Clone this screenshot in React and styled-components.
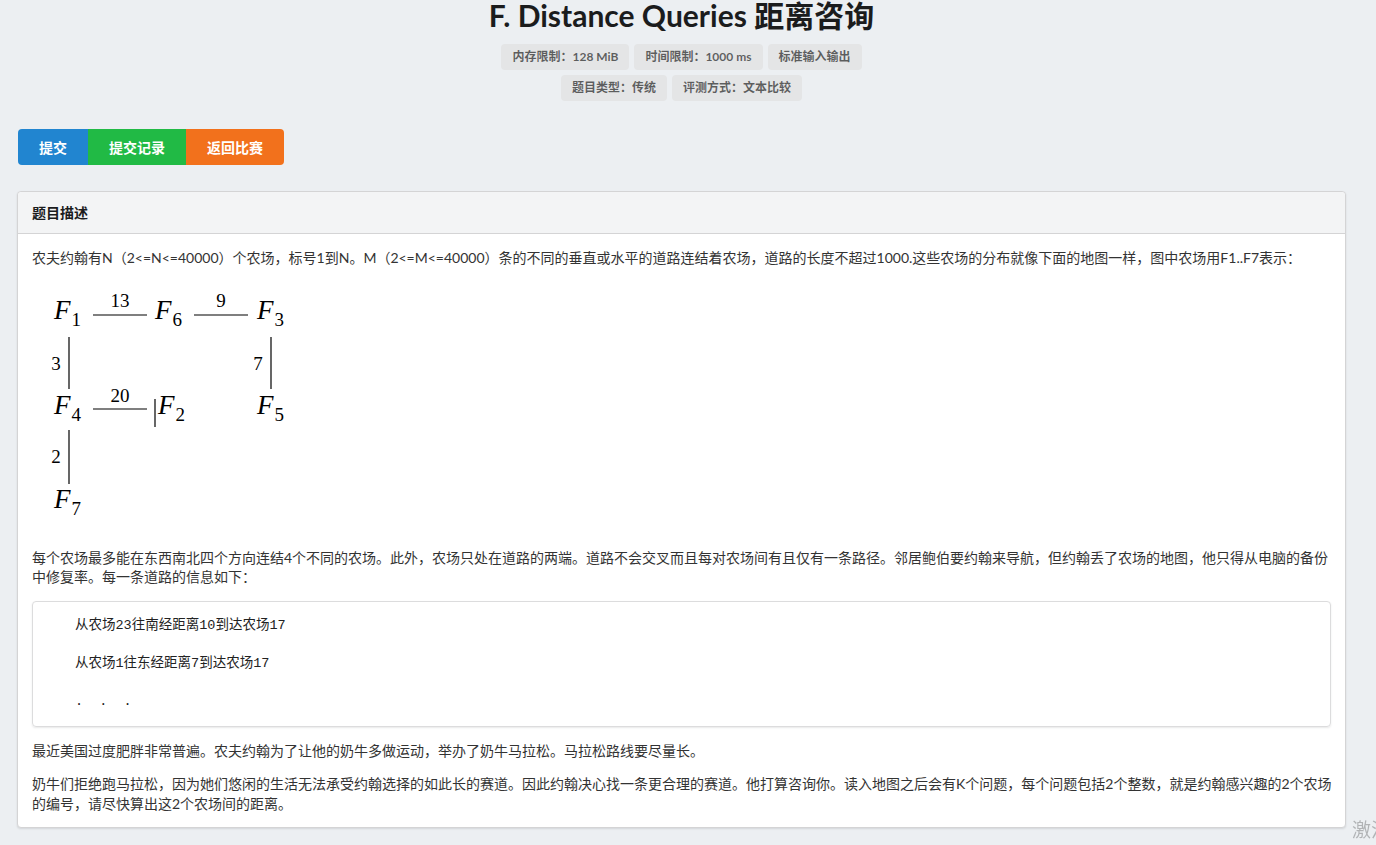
import styled, { createGlobalStyle } from 'styled-components'

const GlobalStyle = createGlobalStyle`
  html, body {
    margin: 0;
    padding: 0;
    background: #eceff2;
    overflow: hidden;
  }
  body {
    font-family: 'Lato', 'Noto Sans CJK SC', sans-serif;
    color: #333;
  }
`

const limits = [
  ['内存限制：128 MiB', '时间限制：1000 ms', '标准输入输出'],
  ['题目类型：传统', '评测方式：文本比较'],
]

const buttons = [
  { text: '提交', color: '#2185d0', width: 70 },
  { text: '提交记录', color: '#21ba45', width: 98 },
  { text: '返回比赛', color: '#f2711c', width: 98 },
]

const farms = [
  { x: 22, y: 37, s: '1' },
  { x: 123, y: 37, s: '6' },
  { x: 225, y: 37, s: '3' },
  { x: 22, y: 132, s: '4' },
  { x: 126, y: 132, s: '2' },
  { x: 225, y: 132, s: '5' },
  { x: 22, y: 226, s: '7' },
]

const weights = [
  { x: 88, y: 25, t: '13' },
  { x: 189, y: 25, t: '9' },
  { x: 24, y: 88, t: '3' },
  { x: 226, y: 88, t: '7' },
  { x: 88, y: 120, t: '20' },
  { x: 24, y: 181, t: '2' },
]

const Diagram = () => (
  <MathFigure width="280" height="240" viewBox="0 0 280 240">
    <g fontFamily="'Liberation Serif', serif" fill="#000">
      {farms.map((f) => (
        <text key={f.s} x={f.x} y={f.y}>
          <tspan fontStyle="italic" fontSize="27">F</tspan>
          <tspan fontSize="19" dy="7" dx="1">{f.s}</tspan>
        </text>
      ))}
      {weights.map((w) => (
        <text key={w.t} x={w.x} y={w.y} fontSize="19" textAnchor="middle">
          {w.t}
        </text>
      ))}
    </g>
    <g stroke="#000" strokeWidth="1.2">
      <line x1="61" y1="33" x2="115" y2="33" />
      <line x1="162" y1="33" x2="216" y2="33" />
      <line x1="37" y1="55" x2="37" y2="107" />
      <line x1="239" y1="55" x2="239" y2="107" />
      <line x1="61" y1="127" x2="115" y2="127" />
      <line x1="123" y1="117" x2="123" y2="145" />
      <line x1="37" y1="148" x2="37" y2="202" />
    </g>
  </MathFigure>
)

const App = () => {
  return (
    <Page>
      <GlobalStyle />
      <Title>F. Distance Queries 距离咨询</Title>
      {limits.map((row, i) => (
        <LabelRow key={i}>
          {row.map((l) => (
            <Label key={l}>{l}</Label>
          ))}
        </LabelRow>
      ))}
      <ButtonGroup>
        {buttons.map((b) => (
          <Button key={b.text} $color={b.color} $width={b.width}>
            {b.text}
          </Button>
        ))}
      </ButtonGroup>
      <Card>
        <CardHeader>题目描述</CardHeader>
        <CardBody>
          <p>
            农夫约翰有N（2&lt;=N&lt;=40000）个农场，标号1到N。M（2&lt;=M&lt;=40000）条的不同的垂直或水平的道路连结着农场，道路的长度不超过1000.这些农场的分布就像下面的地图一样，图中农场用F1..F7表示：
          </p>
          <Diagram />
          <p>
            每个农场最多能在东西南北四个方向连结4个不同的农场。此外，农场只处在道路的两端。道路不会交叉而且每对农场间有且仅有一条路径。邻居鲍伯要约翰来导航，但约翰丢了农场的地图，他只得从电脑的备份中修复率。每一条道路的信息如下：
          </p>
          <Quote>
            <p>从农场23往南经距离10到达农场17</p>
            <p>从农场1往东经距离7到达农场17</p>
            <p>.&nbsp;&nbsp;.&nbsp;&nbsp;.</p>
          </Quote>
          <p>最近美国过度肥胖非常普遍。农夫约翰为了让他的奶牛多做运动，举办了奶牛马拉松。马拉松路线要尽量长。</p>
          <p>
            奶牛们拒绝跑马拉松，因为她们悠闲的生活无法承受约翰选择的如此长的赛道。因此约翰决心找一条更合理的赛道。他打算咨询你。读入地图之后会有K个问题，每个问题包括2个整数，就是约翰感兴趣的2个农场的编号，请尽快算出这2个农场间的距离。
          </p>
        </CardBody>
      </Card>
      <Watermark>激活 Windows</Watermark>
    </Page>
  )
}

const Page = styled.div`
  margin: 0 30px 0 17px;
  padding-bottom: 19px;
`

const Title = styled.h1`
  margin: 0 0 14px;
  text-align: center;
  font-size: 30px;
  line-height: 30px;
  font-weight: 700;
  color: #1b1c1d;
`

const LabelRow = styled.div`
  display: flex;
  justify-content: center;
  gap: 5px;
  margin-bottom: 5px;
`

const Label = styled.span`
  display: inline-block;
  padding: 0 11px;
  height: 26px;
  line-height: 26px;
  font-size: 12px;
  font-weight: 700;
  color: rgba(0, 0, 0, 0.6);
  background: #e4e5e6;
  border-radius: 4px;
`

const ButtonGroup = styled.div`
  display: flex;
  margin: 28px 0 26px 1px;
`

const Button = styled.button`
  width: ${(p) => p.$width}px;
  height: 36px;
  border: 0;
  padding: 0;
  background: ${(p) => p.$color};
  color: #fff;
  font-family: 'Lato', 'Noto Sans CJK SC', sans-serif;
  font-size: 14px;
  font-weight: 700;

  &:first-child {
    border-radius: 4px 0 0 4px;
  }
  &:last-child {
    border-radius: 0 4px 4px 0;
  }
`

const Card = styled.div`
  background: #fff;
  border: 1px solid #d4d4d5;
  border-radius: 4px;
  box-shadow: 0 1px 2px rgba(34, 36, 38, 0.12);
`

const CardHeader = styled.div`
  height: 41px;
  line-height: 41px;
  padding: 0 14px;
  background: #f3f4f5;
  border-bottom: 1px solid #d4d4d5;
  border-radius: 4px 4px 0 0;
  font-size: 14px;
  font-weight: 700;
  color: #1b1c1d;
`

const CardBody = styled.div`
  padding: 14px 12px 14px 14px;
  font-size: 14px;
  line-height: 19.5px;
  color: #333;

  p {
    margin: 0 0 14px;
  }
  & > p:last-child {
    margin-bottom: 0;
  }
`

const MathFigure = styled.svg`
  display: block;
  margin: 12px 0 26px;
`

const Quote = styled.div`
  border: 1px solid #dcdcdd;
  border-radius: 4px;
  box-shadow: 0 1px 2px rgba(34, 36, 38, 0.1);
  margin-right: 2px;
  padding: 14px 42px 14px;
  margin-bottom: 14px;
  font-family: 'Liberation Mono', 'Noto Sans CJK SC', monospace;
  font-size: 13.5px;
  color: #222;

  p {
    margin: 0 0 18px;
    line-height: 20px;
  }
  p:last-child {
    margin-bottom: 0;
  }
`

const Watermark = styled.div`
  position: fixed;
  left: 1352px;
  top: 815px;
  font-size: 19px;
  color: rgba(0, 0, 0, 0.25);
  white-space: nowrap;
  font-family: 'Noto Sans CJK SC', sans-serif;
`

export default App
